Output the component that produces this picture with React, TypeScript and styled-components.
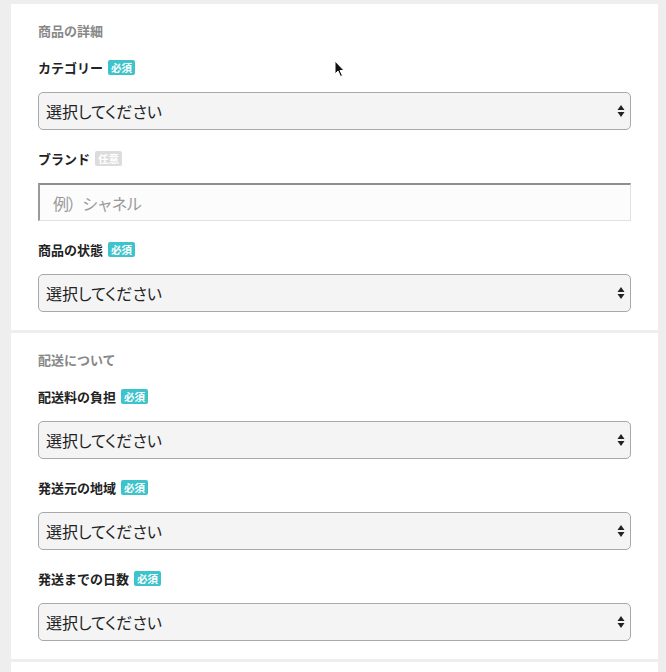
import React from "react";
import styled, { createGlobalStyle } from "styled-components";

const Global = createGlobalStyle`
  html, body { margin: 0; padding: 0; background: #eeeeee; }
  body { font-family: "Noto Sans CJK JP", "Noto Sans", sans-serif; color: #333; }
`;

const Page = styled.div`
  position: relative;
  padding: 4px 8px 0 11px;
  min-height: 672px;
  box-sizing: border-box;
`;

const Section = styled.section`
  background: #fff;
  padding: 17px 27px 18px;
  margin-bottom: 3px;
`;

const Heading = styled.h2`
  margin: 0 0 16px;
  font-size: 13px;
  line-height: 20px;
  font-weight: 700;
  color: #888;
`;

const Fields = styled.div`
  display: flex;
  flex-direction: column;
  gap: 18px;
`;

const Field = styled.div`
  display: flex;
  flex-direction: column;
  gap: 15px;
`;

const LabelRow = styled.div`
  display: flex;
  align-items: center;
  gap: 5px;
  height: 20px;
`;

const LabelText = styled.span`
  font-size: 13px;
  font-weight: 700;
  color: #222;
`;

const Badge = styled.span<{ $required: boolean }>`
  display: inline-flex;
  align-items: center;
  justify-content: center;
  height: 15px;
  padding: 0 3px;
  border-radius: 2px;
  font-size: 10.5px;
  font-weight: 700;
  color: #fff;
  background: ${(p) => (p.$required ? "#3cc3cb" : "#dcdcdc")};
`;

const SelectBox = styled.div`
  position: relative;
  display: flex;
  align-items: center;
  height: 38px;
  box-sizing: border-box;
  border: 1px solid #a9a9a9;
  border-radius: 5px;
  background: #f4f4f4;
  padding: 0 7px;
  font-size: 16px;
  font-feature-settings: "palt";
  color: #222;
`;

const Arrows = styled.svg`
  position: absolute;
  right: 4px;
  top: 50%;
  transform: translateY(-50%);
`;

const InputBox = styled.div`
  display: flex;
  align-items: center;
  height: 38px;
  box-sizing: border-box;
  border: 1px solid #e2e2e2;
  border-top: 2px solid #8e8e8e;
  border-left: 2px solid #9a9a9a;
  background: #fcfcfc;
  padding: 0 13px;
  font-size: 16px;
  letter-spacing: -1.4px;
  color: #9a9a9a;
`;

const Cursor = styled.svg`
  position: absolute;
  left: 334px;
  top: 60px;
`;

function Select() {
  return (
    <SelectBox>
      選択してください
      <Arrows width="10" height="14" viewBox="0 0 10 14">
        <path d="M5 1 L8.5 6 L1.5 6 Z" fill="#222" />
        <path d="M5 13 L8.5 8 L1.5 8 Z" fill="#222" />
      </Arrows>
    </SelectBox>
  );
}

function Label({ text, required }: { text: string; required: boolean }) {
  return (
    <LabelRow>
      <LabelText>{text}</LabelText>
      <Badge $required={required}>{required ? "必須" : "任意"}</Badge>
    </LabelRow>
  );
}

export default function App() {
  return (
    <>
      <Global />
      <Page>
        <Section>
          <Heading>商品の詳細</Heading>
          <Fields>
            <Field>
              <Label text="カテゴリー" required />
              <Select />
            </Field>
            <Field>
              <Label text="ブランド" required={false} />
              <InputBox>例）シャネル</InputBox>
            </Field>
            <Field>
              <Label text="商品の状態" required />
              <Select />
            </Field>
          </Fields>
        </Section>
        <Section>
          <Heading>配送について</Heading>
          <Fields>
            <Field>
              <Label text="配送料の負担" required />
              <Select />
            </Field>
            <Field>
              <Label text="発送元の地域" required />
              <Select />
            </Field>
            <Field>
              <Label text="発送までの日数" required />
              <Select />
            </Field>
          </Fields>
        </Section>
        <Section />
        <Cursor width="12" height="18" viewBox="0 0 12 18">
          <path d="M1 1 L1 14 L4 11 L6.5 16.5 L8.5 15.5 L6 10.5 L10 10.5 Z" fill="#111" stroke="#fff" strokeWidth="1" />
        </Cursor>
      </Page>
    </>
  );
}
